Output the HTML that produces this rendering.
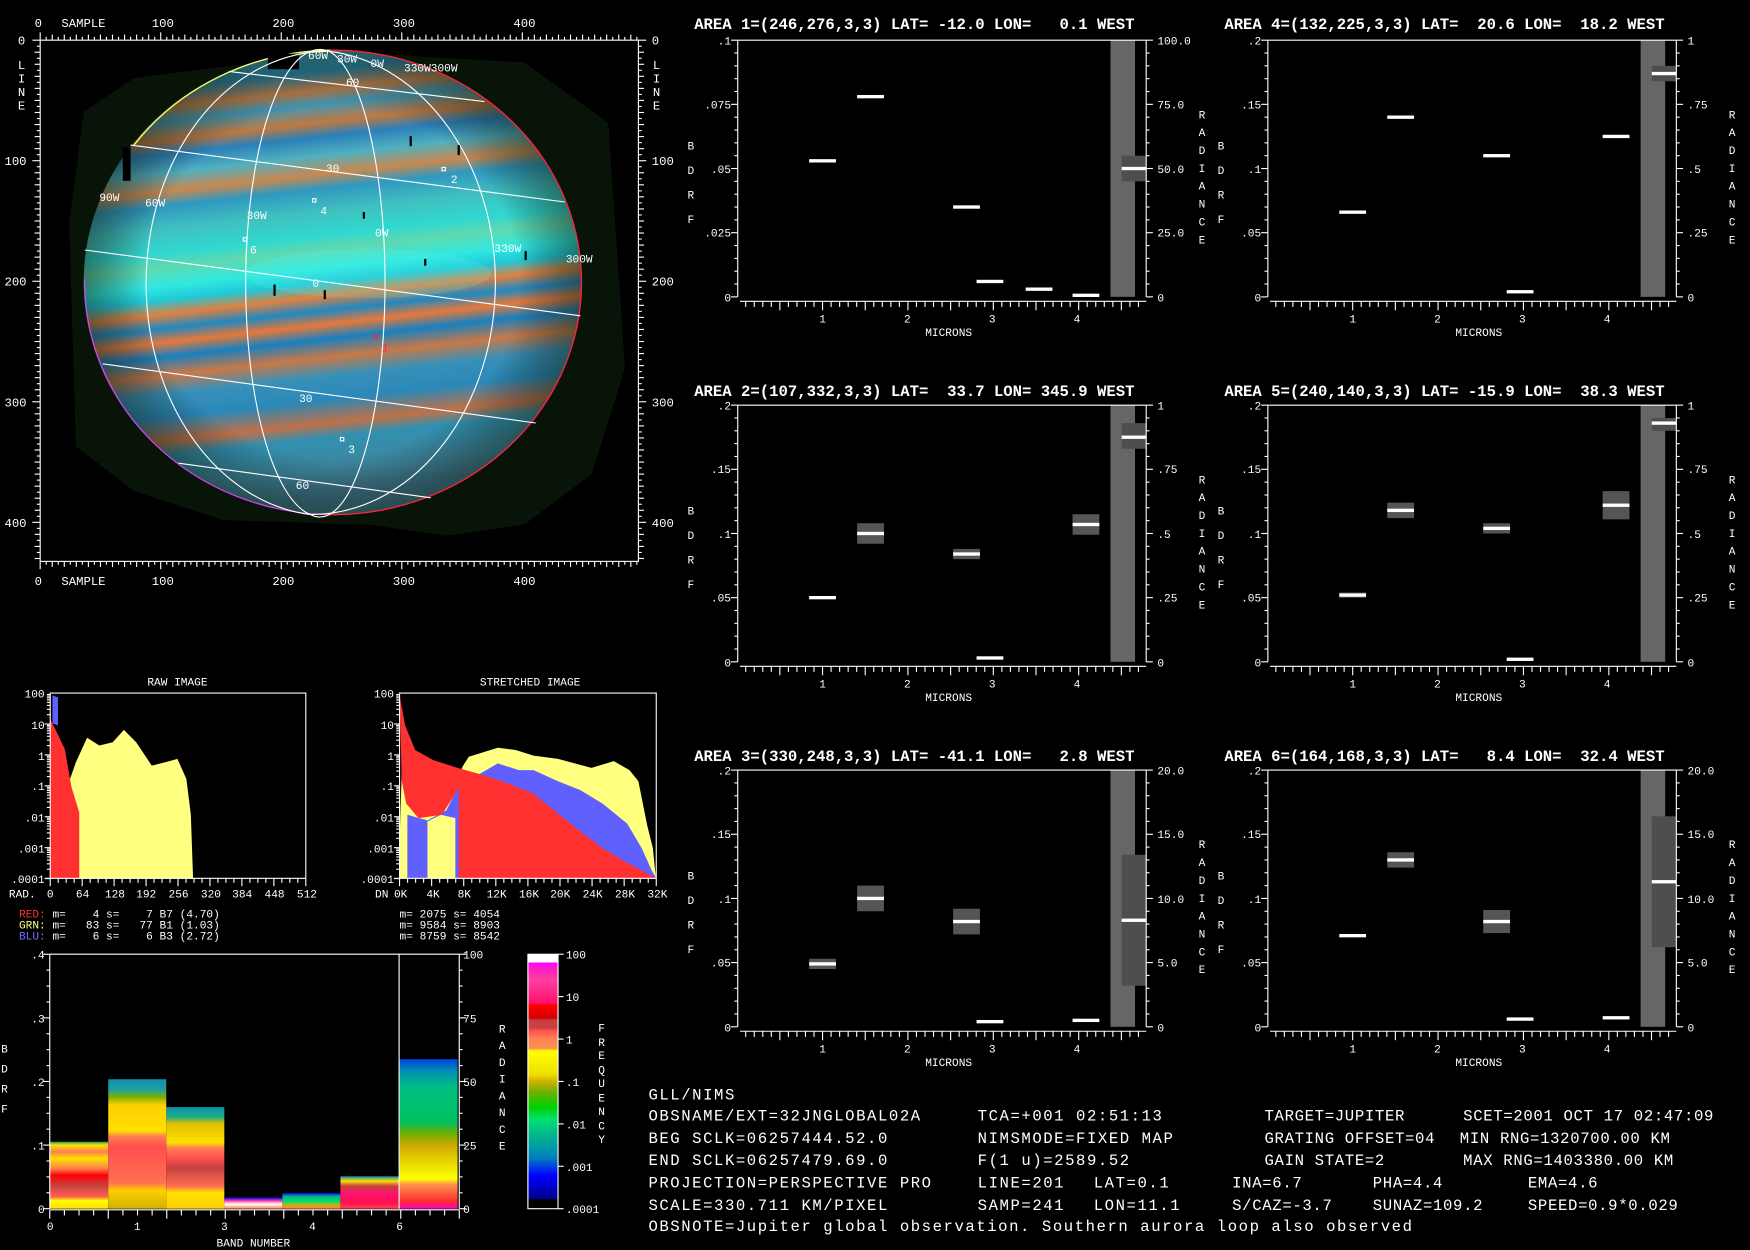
<!DOCTYPE html>
<html><head><meta charset="utf-8"><style>
html,body{margin:0;padding:0;background:#000;width:1750px;height:1250px;overflow:hidden}
svg{display:block}
text{font-family:"Liberation Mono",monospace;fill:#fff;white-space:pre}
.t{font-size:14px;font-weight:bold}
.s{font-size:10px}
.m{font-size:11px}
.b{font-size:14px;letter-spacing:0.6px}
.b2{font-size:14px;letter-spacing:1.4px}
</style></head><body>
<svg id="sv" width="1750" height="1250" viewBox="0 0 1568 1120" preserveAspectRatio="none" xmlns="http://www.w3.org/2000/svg">
<defs>
<linearGradient id="pl" x1="0" y1="0" x2="0.12" y2="1">
<stop offset="0" stop-color="#3aa0b0"/><stop offset=".06" stop-color="#40a0b8"/><stop offset=".1" stop-color="#2888b0"/>
<stop offset=".14" stop-color="#c88048"/><stop offset=".17" stop-color="#4098b8"/><stop offset=".21" stop-color="#c07840"/>
<stop offset=".24" stop-color="#2a80b8"/><stop offset=".28" stop-color="#50b0c0"/><stop offset=".32" stop-color="#c88850"/>
<stop offset=".35" stop-color="#3098c0"/><stop offset=".4" stop-color="#40c0c0"/><stop offset=".45" stop-color="#30d8d0"/>
<stop offset=".48" stop-color="#60d8b0"/><stop offset=".52" stop-color="#30e8e0"/><stop offset=".55" stop-color="#20c8d8"/>
<stop offset=".58" stop-color="#e08040"/><stop offset=".61" stop-color="#2088c0"/><stop offset=".64" stop-color="#e87838"/>
<stop offset=".67" stop-color="#1880c0"/><stop offset=".71" stop-color="#c87848"/><stop offset=".75" stop-color="#3890b8"/>
<stop offset=".8" stop-color="#2a88b8"/><stop offset=".85" stop-color="#c07048"/><stop offset=".88" stop-color="#3090b0"/>
<stop offset=".95" stop-color="#4088a0"/><stop offset="1" stop-color="#407890"/>
</linearGradient>
<radialGradient id="limb" cx=".5" cy=".5" r=".5">
<stop offset=".75" stop-color="#000" stop-opacity="0"/><stop offset="1" stop-color="#102010" stop-opacity=".5"/>
</radialGradient>
<linearGradient id="cb" x1="0" y1="0" x2="0" y2="1">
<stop offset="0" stop-color="#fff"/><stop offset=".032" stop-color="#fff"/><stop offset=".033" stop-color="#ff00ff"/><stop offset=".06" stop-color="#ff20c0"/>
<stop offset=".1" stop-color="#ff40a0"/><stop offset=".19" stop-color="#ff1070"/><stop offset=".2" stop-color="#ff0000"/><stop offset=".25" stop-color="#d00000"/>
<stop offset=".26" stop-color="#c84040"/><stop offset=".29" stop-color="#c84040"/><stop offset=".3" stop-color="#ff5050"/><stop offset=".33" stop-color="#ff8050"/>
<stop offset=".37" stop-color="#ff9050"/><stop offset=".38" stop-color="#ffff00"/><stop offset=".47" stop-color="#f0e000"/><stop offset=".5" stop-color="#d0b000"/>
<stop offset=".54" stop-color="#70b000"/><stop offset=".6" stop-color="#00d000"/><stop offset=".65" stop-color="#00e070"/><stop offset=".72" stop-color="#00b090"/>
<stop offset=".8" stop-color="#0080c0"/><stop offset=".87" stop-color="#0000ff"/><stop offset=".96" stop-color="#000090"/><stop offset=".965" stop-color="#000"/><stop offset="1" stop-color="#000"/>
</linearGradient>
<linearGradient id="g0" x1="0" y1="0" x2="0" y2="1"><stop offset="0" stop-color="#20a060"/><stop offset=".05" stop-color="#ffe000"/><stop offset=".15" stop-color="#ff8050"/><stop offset=".25" stop-color="#ffe000"/><stop offset=".4" stop-color="#ff8050"/><stop offset=".5" stop-color="#ff0000"/><stop offset=".65" stop-color="#c84040"/><stop offset=".82" stop-color="#ff6050"/><stop offset=".88" stop-color="#ffff00"/><stop offset="1" stop-color="#ffe000"/></linearGradient>
<linearGradient id="g1" x1="0" y1="0" x2="0" y2="1"><stop offset="0" stop-color="#1090b0"/><stop offset=".08" stop-color="#20a0a0"/><stop offset=".14" stop-color="#80b000"/><stop offset=".2" stop-color="#ffd000"/><stop offset=".4" stop-color="#ffe000"/><stop offset=".44" stop-color="#ff8050"/><stop offset=".52" stop-color="#ff5050"/><stop offset=".8" stop-color="#ff7050"/><stop offset=".86" stop-color="#ffd000"/><stop offset="1" stop-color="#d0b000"/></linearGradient>
<linearGradient id="g2" x1="0" y1="0" x2="0" y2="1"><stop offset="0" stop-color="#1090b0"/><stop offset=".1" stop-color="#20b080"/><stop offset=".16" stop-color="#e0c000"/><stop offset=".35" stop-color="#ffe000"/><stop offset=".4" stop-color="#ff8050"/><stop offset=".5" stop-color="#ff5050"/><stop offset=".6" stop-color="#c84040"/><stop offset=".78" stop-color="#ff7050"/><stop offset=".84" stop-color="#ffe000"/><stop offset="1" stop-color="#ffd000"/></linearGradient>
<linearGradient id="g3" x1="0" y1="0" x2="0" y2="1"><stop offset="0" stop-color="#0000ff"/><stop offset=".3" stop-color="#ff40a0"/><stop offset=".6" stop-color="#fff"/><stop offset="1" stop-color="#ff8050"/></linearGradient>
<linearGradient id="g4" x1="0" y1="0" x2="0" y2="1"><stop offset="0" stop-color="#0000ff"/><stop offset=".2" stop-color="#00b090"/><stop offset=".55" stop-color="#00e070"/><stop offset=".75" stop-color="#d0b000"/><stop offset="1" stop-color="#ff8050"/></linearGradient>
<linearGradient id="g5" x1="0" y1="0" x2="0" y2="1"><stop offset="0" stop-color="#1090b0"/><stop offset=".15" stop-color="#ffe000"/><stop offset=".3" stop-color="#c84040"/><stop offset=".55" stop-color="#ff1070"/><stop offset=".8" stop-color="#ff1050"/><stop offset="1" stop-color="#ff4050"/></linearGradient>
<linearGradient id="g6" x1="0" y1="0" x2="0" y2="1"><stop offset="0" stop-color="#0040e0"/><stop offset=".08" stop-color="#0090b0"/><stop offset=".2" stop-color="#00c080"/><stop offset=".42" stop-color="#00c060"/><stop offset=".5" stop-color="#70b000"/><stop offset=".58" stop-color="#d0a800"/><stop offset=".65" stop-color="#e0c800"/><stop offset=".8" stop-color="#ffff00"/><stop offset=".84" stop-color="#ff9050"/><stop offset=".95" stop-color="#ff3030"/><stop offset="1" stop-color="#ff00c0"/></linearGradient>
</defs>

<!-- Planet panel -->
<polygon points="75,100 120,70 230,56 330,48 470,56 545,110 560,330 530,425 470,470 400,480 330,470 200,466 120,440 68,400 62,200" fill="#081408"/>
<ellipse cx="298" cy="253" rx="223" ry="208" fill="url(#pl)"/>
<ellipse cx="298" cy="253" rx="223" ry="208" fill="url(#limb)"/>
<ellipse cx="330" cy="245" rx="110" ry="22" fill="#60fff0" opacity=".18"/>
<path d="M120 130 A223 208 0 0 1 296 45" fill="none" stroke="#ffff60" stroke-width="1.2"/>
<path d="M296 45 A223 208 0 0 1 521 253 A223 208 0 0 1 290 461" fill="none" stroke="#ff2040" stroke-width="1.2"/>
<path d="M290 461 A223 208 0 0 1 76 250" fill="none" stroke="#e040ff" stroke-width="1"/>
<rect x="110" y="132" width="7" height="30" fill="#000"/>
<rect x="240" y="48" width="28" height="14" fill="#000"/>
<g stroke="#fff" stroke-width="1" fill="none">
<path d="M205 64 L434 91"/><path d="M117 130 L506 181"/><path d="M76 224 L520 283"/><path d="M92 326 L480 379"/><path d="M160 415 L386 446"/>
<path d="M295 46 A163 208 0 0 0 278 461"/><path d="M295 46 A66 208 0 0 0 278 461"/>
<path d="M295 46 A58 208 0 0 1 278 461"/><path d="M295 46 A165 208 0 0 1 278 461"/>
<rect x="396" y="150" width="3" height="3"/><rect x="280" y="178" width="3" height="3"/><rect x="218" y="213" width="3" height="3"/><rect x="305" y="392" width="3" height="3"/>
</g>
<rect x="335" y="300" width="3" height="3" fill="none" stroke="#ff2020"/>
<g class="s">
<text x="276" y="53">60W</text><text x="302" y="56">30W</text><text x="332" y="60">0W</text><text x="362" y="64">330W300W</text>
<text x="310" y="77">60</text><text x="292" y="154">30</text><text x="404" y="164">2</text><text x="287" y="192">4</text>
<text x="89" y="180">90W</text><text x="130" y="185">60W</text><text x="221" y="196">30W</text><text x="336" y="212">0W</text>
<text x="443" y="226">330W</text><text x="507" y="235">300W</text><text x="224" y="227">6</text><text x="280" y="257">0</text>
<text x="268" y="360">30</text><text x="312" y="406">3</text><text x="265" y="438">60</text><text x="342" y="315" style="fill:#ff3030">1</text>
</g>
<g fill="#000"><rect x="245" y="255" width="2" height="10"/><rect x="290" y="260" width="2" height="8"/><rect x="367" y="122" width="2" height="9"/><rect x="410" y="130" width="2" height="9"/><rect x="325" y="190" width="2" height="6"/><rect x="470" y="225" width="2" height="8"/><rect x="380" y="232" width="2" height="6"/></g>
<rect x="36" y="36" width="536" height="467" fill="none" stroke="#fff"/>
<g id="ptick" stroke="#fff"></g>
<g class="m">
<text x="31" y="24">0</text><text x="55" y="24">SAMPLE</text><text x="136" y="24">100</text><text x="244" y="24">200</text><text x="352" y="24">300</text><text x="460" y="24">400</text>
<text x="31" y="524">0</text><text x="55" y="524">SAMPLE</text><text x="136" y="524">100</text><text x="244" y="524">200</text><text x="352" y="524">300</text><text x="460" y="524">400</text>
<text x="16" y="40">0</text><text x="4" y="148">100</text><text x="4" y="256">200</text><text x="4" y="364">300</text><text x="4" y="472">400</text>
<text x="584" y="40">0</text><text x="584" y="148">100</text><text x="584" y="256">200</text><text x="584" y="364">300</text><text x="584" y="472">400</text>
<text x="16" y="62">L</text><text x="16" y="74">I</text><text x="16" y="86">N</text><text x="16" y="98">E</text>
<text x="585" y="62">L</text><text x="585" y="74">I</text><text x="585" y="86">N</text><text x="585" y="98">E</text>
</g>

<!-- Charts -->
<g id="charts"></g>
<g class="t">
<text x="622" y="26">AREA 1=(246,276,3,3) LAT= -12.0 LON=   0.1 WEST</text>
<text x="1097" y="26">AREA 4=(132,225,3,3) LAT=  20.6 LON=  18.2 WEST</text>
<text x="622" y="355">AREA 2=(107,332,3,3) LAT=  33.7 LON= 345.9 WEST</text>
<text x="1097" y="355">AREA 5=(240,140,3,3) LAT= -15.9 LON=  38.3 WEST</text>
<text x="622" y="682">AREA 3=(330,248,3,3) LAT= -41.1 LON=   2.8 WEST</text>
<text x="1097" y="682">AREA 6=(164,168,3,3) LAT=   8.4 LON=  32.4 WEST</text>
</g>
<g class="s" text-anchor="end">
<text x="655" y="40">.1</text><text x="655" y="97">.075</text><text x="655" y="155">.05</text><text x="655" y="212">.025</text><text x="655" y="270">0</text>
<text x="1130" y="40">.2</text><text x="1130" y="97">.15</text><text x="1130" y="155">.1</text><text x="1130" y="212">.05</text><text x="1130" y="270">0</text>
<text x="655" y="367">.2</text><text x="655" y="424">.15</text><text x="655" y="482">.1</text><text x="655" y="539">.05</text><text x="655" y="597">0</text>
<text x="1130" y="367">.2</text><text x="1130" y="424">.15</text><text x="1130" y="482">.1</text><text x="1130" y="539">.05</text><text x="1130" y="597">0</text>
<text x="655" y="694">.2</text><text x="655" y="751">.15</text><text x="655" y="809">.1</text><text x="655" y="866">.05</text><text x="655" y="924">0</text>
<text x="1130" y="694">.2</text><text x="1130" y="751">.15</text><text x="1130" y="809">.1</text><text x="1130" y="866">.05</text><text x="1130" y="924">0</text>
</g>
<g class="s">
<text x="1037" y="40">100.0</text><text x="1037" y="97">75.0</text><text x="1037" y="155">50.0</text><text x="1037" y="212">25.0</text><text x="1037" y="270">0</text>
<text x="1512" y="40">1</text><text x="1512" y="97">.75</text><text x="1512" y="155">.5</text><text x="1512" y="212">.25</text><text x="1512" y="270">0</text>
<text x="1037" y="367">1</text><text x="1037" y="424">.75</text><text x="1037" y="482">.5</text><text x="1037" y="539">.25</text><text x="1037" y="597">0</text>
<text x="1512" y="367">1</text><text x="1512" y="424">.75</text><text x="1512" y="482">.5</text><text x="1512" y="539">.25</text><text x="1512" y="597">0</text>
<text x="1037" y="694">20.0</text><text x="1037" y="751">15.0</text><text x="1037" y="809">10.0</text><text x="1037" y="866">5.0</text><text x="1037" y="924">0</text>
<text x="1512" y="694">20.0</text><text x="1512" y="751">15.0</text><text x="1512" y="809">10.0</text><text x="1512" y="866">5.0</text><text x="1512" y="924">0</text>
</g>
<g class="s">
<text x="734" y="289">1</text><text x="810" y="289">2</text><text x="886" y="289">3</text><text x="962" y="289">4</text><text x="829" y="301">MICRONS</text>
<text x="1209" y="289">1</text><text x="1285" y="289">2</text><text x="1361" y="289">3</text><text x="1437" y="289">4</text><text x="1304" y="301">MICRONS</text>
<text x="734" y="616">1</text><text x="810" y="616">2</text><text x="886" y="616">3</text><text x="962" y="616">4</text><text x="829" y="628">MICRONS</text>
<text x="1209" y="616">1</text><text x="1285" y="616">2</text><text x="1361" y="616">3</text><text x="1437" y="616">4</text><text x="1304" y="628">MICRONS</text>
<text x="734" y="943">1</text><text x="810" y="943">2</text><text x="886" y="943">3</text><text x="962" y="943">4</text><text x="829" y="955">MICRONS</text>
<text x="1209" y="943">1</text><text x="1285" y="943">2</text><text x="1361" y="943">3</text><text x="1437" y="943">4</text><text x="1304" y="955">MICRONS</text>
</g>
<g class="s">
<text x="616" y="134">B</text><text x="616" y="156">D</text><text x="616" y="178">R</text><text x="616" y="200">F</text>
<text x="1091" y="134">B</text><text x="1091" y="156">D</text><text x="1091" y="178">R</text><text x="1091" y="200">F</text>
<text x="616" y="461">B</text><text x="616" y="483">D</text><text x="616" y="505">R</text><text x="616" y="527">F</text>
<text x="1091" y="461">B</text><text x="1091" y="483">D</text><text x="1091" y="505">R</text><text x="1091" y="527">F</text>
<text x="616" y="788">B</text><text x="616" y="810">D</text><text x="616" y="832">R</text><text x="616" y="854">F</text>
<text x="1091" y="788">B</text><text x="1091" y="810">D</text><text x="1091" y="832">R</text><text x="1091" y="854">F</text>
<text x="1074" y="106">R</text><text x="1074" y="122">A</text><text x="1074" y="138">D</text><text x="1074" y="154">I</text><text x="1074" y="170">A</text><text x="1074" y="186">N</text><text x="1074" y="202">C</text><text x="1074" y="218">E</text>
<text x="1549" y="106">R</text><text x="1549" y="122">A</text><text x="1549" y="138">D</text><text x="1549" y="154">I</text><text x="1549" y="170">A</text><text x="1549" y="186">N</text><text x="1549" y="202">C</text><text x="1549" y="218">E</text>
<text x="1074" y="433">R</text><text x="1074" y="449">A</text><text x="1074" y="465">D</text><text x="1074" y="481">I</text><text x="1074" y="497">A</text><text x="1074" y="513">N</text><text x="1074" y="529">C</text><text x="1074" y="545">E</text>
<text x="1549" y="433">R</text><text x="1549" y="449">A</text><text x="1549" y="465">D</text><text x="1549" y="481">I</text><text x="1549" y="497">A</text><text x="1549" y="513">N</text><text x="1549" y="529">C</text><text x="1549" y="545">E</text>
<text x="1074" y="760">R</text><text x="1074" y="776">A</text><text x="1074" y="792">D</text><text x="1074" y="808">I</text><text x="1074" y="824">A</text><text x="1074" y="840">N</text><text x="1074" y="856">C</text><text x="1074" y="872">E</text>
<text x="1549" y="760">R</text><text x="1549" y="776">A</text><text x="1549" y="792">D</text><text x="1549" y="808">I</text><text x="1549" y="824">A</text><text x="1549" y="840">N</text><text x="1549" y="856">C</text><text x="1549" y="872">E</text>
</g>

<!-- Histograms -->
<polygon points="45,676 45,693 62,700 68,683 78,661 89,668 101,665 111,654 122,665 136,686 148,683 159,680 167,698 171,730 173,787 45,787" fill="#ffff80"/>
<polygon points="45,644 58,671 64,705 71,728 71,787 45,787" fill="#ff3030"/>
<polygon points="47,623 52,625 52,650 47,648" fill="#6060ff"/>
<polygon points="358,755 358,787 588,787 588,790 585,760 580,740 576,720 572,700 564,690 550,682 530,688 500,680 478,677 462,672 446,670 420,678 415,686 405,706 390,717 380,720 370,712 365,700 360,690" fill="#ffff80"/>
<polygon points="365,730 383,735 400,726 412,702 422,698 446,684 465,690 478,690 500,700 520,708 540,720 562,738 575,760 584,780 588,787 365,787" fill="#6060ff"/>
<polygon points="368,787 383,787 383,736 395,730 408,733 408,787" fill="#ffff80"/>
<polygon points="358,623 363,650 372,672 388,681 410,688 428,693 450,700 478,711 500,729 520,745 540,760 560,772 575,780 588,787 411,787 411,706 396,730 375,733 364,720 360,700" fill="#ff3030"/>
<g fill="none" stroke="#fff">
<rect x="45" y="621" width="229" height="166"/><rect x="358" y="621" width="230" height="166"/>
</g>
<g id="htick" stroke="#fff"></g>
<g class="s" text-anchor="middle"><text x="159" y="614">RAW IMAGE</text><text x="475" y="614">STRETCHED IMAGE</text></g>
<g class="s" text-anchor="end">
<text x="40" y="625">100</text><text x="40" y="653">10</text><text x="40" y="681">1</text><text x="40" y="708">.1</text><text x="40" y="736">.01</text><text x="40" y="764">.001</text><text x="40" y="791">.0001</text>
<text x="353" y="625">100</text><text x="353" y="653">10</text><text x="353" y="681">1</text><text x="353" y="708">.1</text><text x="353" y="736">.01</text><text x="353" y="764">.001</text><text x="353" y="791">.0001</text>
</g>
<g class="s">
<text x="8" y="804">RAD.</text><text x="42" y="804">0</text><text x="68" y="804">64</text><text x="94" y="804">128</text><text x="122" y="804">192</text><text x="151" y="804">256</text><text x="180" y="804">320</text><text x="208" y="804">384</text><text x="237" y="804">448</text><text x="266" y="804">512</text>
<text x="336" y="804">DN</text><text x="353" y="804">0K</text><text x="382" y="804">4K</text><text x="410" y="804">8K</text><text x="436" y="804">12K</text><text x="465" y="804">16K</text><text x="493" y="804">20K</text><text x="522" y="804">24K</text><text x="551" y="804">28K</text><text x="580" y="804">32K</text>
<text x="17" y="822"><tspan style="fill:#ff3030">RED:</tspan> m=    4 s=    7 B7 (4.70)</text>
<text x="17" y="832"><tspan style="fill:#ffff80">GRN:</tspan> m=   83 s=   77 B1 (1.03)</text>
<text x="17" y="842"><tspan style="fill:#7070ff">BLU:</tspan> m=    6 s=    6 B3 (2.72)</text>
<text x="358" y="822">m= 2075 s= 4054</text><text x="358" y="832">m= 9584 s= 8903</text><text x="358" y="842">m= 8759 s= 8542</text>
</g>

<!-- Band chart -->
<rect x="44.6" y="1023" width="52.4" height="60" fill="url(#g0)"/>
<rect x="97" y="967" width="52" height="116" fill="url(#g1)"/>
<rect x="149" y="992" width="52" height="91" fill="url(#g2)"/>
<rect x="201" y="1073" width="52" height="10" fill="url(#g3)"/>
<rect x="253" y="1069" width="52" height="14" fill="url(#g4)"/>
<rect x="305" y="1054" width="53" height="29" fill="url(#g5)"/>
<rect x="358" y="949" width="52" height="134" fill="url(#g6)"/>
<g stroke="#fff" fill="none"><path d="M44.6 855 H411.5 M44.6 855 V1083 M411.5 855 V1083 M357.6 855 V1083 M44.6 1084 H411.5"/></g>
<rect x="473" y="855" width="27" height="228" fill="url(#cb)" stroke="#fff"/>
<g id="btick" stroke="#fff"></g>
<g class="s" text-anchor="end"><text x="40" y="859">.4</text><text x="40" y="916">.3</text><text x="40" y="973">.2</text><text x="40" y="1030">.1</text><text x="40" y="1087">0</text></g>
<g class="s">
<text x="415" y="859">100</text><text x="415" y="916">75</text><text x="415" y="973">50</text><text x="415" y="1030">25</text><text x="415" y="1087">0</text>
<text x="507" y="859">100</text><text x="507" y="897">10</text><text x="507" y="935">1</text><text x="507" y="973">.1</text><text x="507" y="1011">.01</text><text x="507" y="1049">.001</text><text x="507" y="1087">.0001</text>
<text x="42" y="1102">0</text><text x="120" y="1102">1</text><text x="198" y="1102">3</text><text x="277" y="1102">4</text><text x="355" y="1102">6</text>
<text x="194" y="1117">BAND NUMBER</text>
<text x="1" y="943">B</text><text x="1" y="961">D</text><text x="1" y="979">R</text><text x="1" y="997">F</text>
<text x="447" y="925">R</text><text x="447" y="940">A</text><text x="447" y="955">D</text><text x="447" y="970">I</text><text x="447" y="985">A</text><text x="447" y="1000">N</text><text x="447" y="1015">C</text><text x="447" y="1030">E</text>
<text x="536" y="924">F</text><text x="536" y="937">R</text><text x="536" y="949">E</text><text x="536" y="962">Q</text><text x="536" y="974">U</text><text x="536" y="987">E</text><text x="536" y="999">N</text><text x="536" y="1012">C</text><text x="536" y="1024">Y</text>
</g>

<!-- Text block -->
<g class="b2">
<text x="581" y="985">GLL/NIMS</text>
<text x="581" y="1004">OBSNAME/EXT=32JNGLOBAL02A</text><text x="876" y="1004">TCA=+001 02:51:13</text>
<text x="581" y="1024">BEG SCLK=06257444.52.0</text><text x="876" y="1024">NIMSMODE=FIXED MAP</text>
<text x="581" y="1044">END SCLK=06257479.69.0</text><text x="876" y="1044">F(1 u)=2589.52</text>
<text x="581" y="1064">PROJECTION=PERSPECTIVE PRO</text><text x="876" y="1064">LINE=201</text><text x="980" y="1064">LAT=0.1</text>
<text x="581" y="1084">SCALE=330.711 KM/PIXEL</text><text x="876" y="1084">SAMP=241</text><text x="980" y="1084">LON=11.1</text>
<text x="581" y="1103">OBSNOTE=Jupiter global observation. Southern aurora loop also observed</text>
</g>
<g class="b">
<text x="1133" y="1004">TARGET=JUPITER</text><text x="1311" y="1004">SCET=2001 OCT 17 02:47:09</text>
<text x="1133" y="1024">GRATING OFFSET=04</text><text x="1299" y="1024"> MIN RNG=1320700.00 KM</text>
<text x="1133" y="1044">GAIN STATE=2</text><text x="1311" y="1044">MAX RNG=1403380.00 KM</text>
<text x="1104" y="1064">INA=6.7</text><text x="1230" y="1064">PHA=4.4</text><text x="1369" y="1064">EMA=4.6</text>
<text x="1104" y="1084">S/CAZ=-3.7</text><text x="1230" y="1084">SUNAZ=109.2</text><text x="1369" y="1084">SPEED=0.9*0.029</text>
</g>
</svg>
<script>
var NS="http://www.w3.org/2000/svg";
function el(p,t,a){var e=document.createElementNS(NS,t);for(var k in a)e.setAttribute(k,a[k]);p.appendChild(e);return e;}
function ln(p,x1,y1,x2,y2){el(p,"line",{x1:x1,y1:y1,x2:x2,y2:y2});}
var pt=document.getElementById("ptick");
for(var s=0;s<=496;s+=5){var x=36+s*1.08,L=(s%10==0)?(s%100==0?7:5):3;ln(pt,x,36,x,36-L);ln(pt,x,503,x,503+L);}
for(var s=0;s<=432;s+=5){var y=36+s*1.08,L=(s%10==0)?(s%100==0?7:5):3;ln(pt,36,y,36-L,y);ln(pt,572,y,572+L,y);}
var C=document.getElementById("charts");
var cols=[661,1136],rows=[36,363,690];
var data=[
 {c:0,r:0,b:[[76,.53,0],[119,.78,0],[205,.35,0],[226,.06,0],[270,.03,0],[312,.006,0]],rv:.5,rb:[.45,.55]},
 {c:0,r:1,b:[[76,.25,0],[119,.5,.04],[205,.42,.02],[226,.015,0],[312,.535,.04]],rv:.875,rb:[.83,.93]},
 {c:0,r:2,b:[[76,.245,.02],[119,.5,.05],[205,.41,.05],[226,.02,0],[312,.025,0]],rv:.415,rb:[.16,.67]},
 {c:1,r:0,b:[[76,.33,0],[119,.7,0],[205,.55,0],[226,.02,0],[312,.625,0]],rv:.87,rb:[.84,.9]},
 {c:1,r:1,b:[[76,.26,.01],[119,.59,.03],[205,.52,.02],[226,.01,0],[312,.61,.055]],rv:.93,rb:[.9,.95]},
 {c:1,r:2,b:[[76,.355,0],[119,.65,.03],[205,.41,.045],[226,.03,0],[312,.035,0]],rv:.565,rb:[.31,.82]}
];
data.forEach(function(d){
 var L=cols[d.c],T=rows[d.r],R=L+366,B=T+230,H=230;
 el(C,"rect",{x:L+334,y:T,width:22,height:H,fill:"#666"});
 el(C,"rect",{x:L+344,y:B-d.rb[1]*H,width:22,height:(d.rb[1]-d.rb[0])*H,fill:"#4e4e4e"});
 el(C,"rect",{x:L+344,y:B-d.rv*H-1.5,width:22,height:3,fill:"#fff"});
 d.b.forEach(function(b){var xc=L+b[0];
  if(b[2]>0)el(C,"rect",{x:xc-12,y:B-(b[1]+b[2])*H,width:24,height:2*b[2]*H,fill:"#555"});
  el(C,"rect",{x:xc-12,y:B-b[1]*H-1.5,width:24,height:3,fill:"#fff"});});
 var g=el(C,"g",{stroke:"#fff",fill:"none"});
 ln(g,L,T,R,T);ln(g,L,T,L,B);ln(g,R,T,R,B);ln(g,L+2,B+4,R,B+4);
 for(var i=0;i<=20;i++){var y=T+i*H/20,w=(i%5==0)?6:3;ln(g,L,y,L-w,y);ln(g,R,y,R+w,y);}
 for(var m=0.1;m<4.8;m+=0.1){var x=L+76+(m-1)*76.5;if(x>R+0.5)break;var k=Math.round(m*10);var w=(k%5==0)?8:5;ln(g,x,B+4,x,B+4+w);}
});
var ht=document.getElementById("htick");
[45,358].forEach(function(L){
 for(var d=0;d<6;d++){var y0=621+d*27.7;for(var j=1;j<=9;j++){var y=y0+27.7*(1-Math.log10(j));var w=(j==1)?5:3;ln(ht,L,y,L-w,y);} }
 ln(ht,L,787,L-5,787);
 for(var i=0;i<=32;i++){var x=L+i*(L==45?229:230)/32;var w=(i%4==0)?7:4;ln(ht,x,787,x,787+w);}
});
var bt=document.getElementById("btick");
for(var i=0;i<=16;i++){var y=855+i*228/16,w=(i%4==0)?6:3;ln(bt,44.6,y,44.6-w,y);ln(bt,411.5,y,411.5+w,y);}
for(var i=0;i<=7*4;i++){var x=44.6+i*(366.9/28);if(x>411.5)break;ln(bt,x,1084,x,1084+(i%4==0?8:5));}
[855,893,931,969,1007,1045,1083].forEach(function(y){ln(bt,500,y,505,y);});
</script>
</body></html>
